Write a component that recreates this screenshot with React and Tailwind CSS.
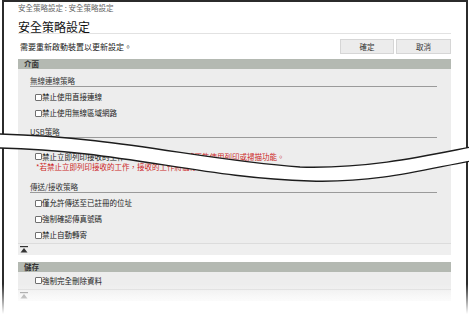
import React from "react";

const Check = ({ label, h = "h-[16px]" }) => (
  <div className={`flex ${h} items-center pl-[17px]`}>
    <span className="h-[7px] w-[7px] shrink-0 rounded-[1px] border border-[#6f6f6f] bg-white" />
    <span className="text-[7.5px] leading-[8px] text-[#222]">{label}</span>
  </div>
);

const SubHead = ({ children, className = "" }) => (
  <div
    className={`ml-[12px] mr-[14px] flex h-[13px] items-end border-b border-[#9a9a9a] pb-[1px] ${className}`}
  >
    <span className="text-[7.5px] leading-[8px] text-[#333]">{children}</span>
  </div>
);

const SectionBar = ({ children }) => (
  <div className="flex h-[10px] items-center bg-[#b4b9b2] pl-[6px]">
    <span className="text-[7.5px] font-bold leading-[8px] text-[#333]">
      {children}
    </span>
  </div>
);

const TopIcon = ({ faded }) => (
  <svg width="8" height="7" viewBox="0 0 8 7" className={faded ? "opacity-50" : ""}>
    <rect x="0" y="0" width="8" height="1.2" fill="#333" />
    <polygon points="4,2 7.5,6.5 0.5,6.5" fill="#333" />
  </svg>
);

export default function App() {
  return (
    <div className="relative h-[314px] w-[469px] overflow-hidden bg-white font-['Noto_Sans_CJK_TC','Noto_Sans',sans-serif]">
      <div className="ml-[2px] mr-[1px] h-[330px] border-x-2 border-t-2 border-[#2b2b2b] pl-[14px] pr-[15px]">
        {/* header */}
        <div className="pt-[2px] text-[7.5px] leading-[8px] text-[#666]">
          安全策略設定 : 安全策略設定
        </div>
        <div className="mt-[9px] border-b border-[#e2e2e2] text-[12px] leading-[12px] text-[#111]">
          安全策略設定
        </div>
        <div className="mt-[5px] flex h-[15px] items-center justify-between">
          <span className="pl-[2px] text-[8px] leading-[8px] text-[#222]">
            需要重新啟動裝置以更新設定。
          </span>
          <div className="flex h-[15px] gap-[2px]">
            <button className="h-[15px] w-[54px] border border-[#d6d6d6] bg-[#ececec] text-[7.5px] leading-[8px] text-[#333]">
              確定
            </button>
            <button className="h-[15px] w-[55px] border border-[#d6d6d6] bg-[#ececec] text-[7.5px] leading-[8px] text-[#333]">
              取消
            </button>
          </div>
        </div>

        {/* 介面 */}
        <div className="mt-[5px]">
          <SectionBar>介面</SectionBar>
          <div className="bg-[#ededed] pt-[5px]">
            <SubHead>無線連線策略</SubHead>
            <div className="mt-[2px]">
              <Check label="禁止使用直接連線" />
              <Check label="禁止使用無線區域網路" />
            </div>
            <SubHead className="mt-[4px]">USB策略</SubHead>
            <div className="mt-[12px]">
              <Check label="禁止立即列印接收的工作" h="h-[13px]" />
              <div className="h-[8px] whitespace-nowrap pl-[18px] text-[7.5px] leading-[8px] text-[#cc1f1f]">
                *若禁止立即列印接收的工作，接收的工作將儲存在記憶體
              </div>
            </div>
            <SubHead className="mt-[9px]">傳送/接收策略</SubHead>
            <div className="mt-[2px]">
              <Check label="僅允許傳送至已註冊的位址" />
              <Check label="強制確認傳真號碼" />
              <Check label="禁止自動轉寄" />
            </div>
            <div className="flex h-[12px] items-center border-t border-[#dcdcdc] bg-[#efefef] pl-[2px]">
              <TopIcon />
            </div>
          </div>
        </div>

        {/* 儲存 */}
        <div className="mt-[7px]">
          <SectionBar>儲存</SectionBar>
          <div className="bg-[#ededed]">
            <Check label="強制完全刪除資料" h="h-[17px]" />
            <div className="flex h-[12px] items-center border-t border-[#dcdcdc] bg-linear-to-b from-[#efefef] to-[#f7f7f7] pl-[2px]">
              <TopIcon faded />
            </div>
          </div>
        </div>
      </div>

      {/* upper piece fragment seen above the tear */}
      <div className="absolute left-[187px] top-[153px] whitespace-nowrap text-[7.5px] leading-[8px] text-[#cc1f1f]">
        將不能使用列印或掃描功能。
      </div>

      {/* torn-paper break */}
      <svg
        className="pointer-events-none absolute left-0 top-0"
        width="469"
        height="314"
        viewBox="0 0 469 314"
      >
        <path
          d="M-2,134 C120,137 200,160 300,167 C370,169 430,155 471,147 L471,161 C430,168 380,183 310,181 C200,178 120,150 -2,148 Z"
          fill="#fff"
        />
        <path
          d="M-2,134 C120,137 200,160 300,167 C370,169 430,155 471,147"
          fill="none"
          stroke="#1c1c1c"
          strokeWidth="1.4"
        />
        <path
          d="M-2,148 C120,150 200,178 310,181 C380,183 430,168 471,161"
          fill="none"
          stroke="#1c1c1c"
          strokeWidth="1.4"
        />
      </svg>

      {/* bottom fade */}
      <div className="pointer-events-none absolute bottom-0 left-0 h-[30px] w-full bg-linear-to-b from-transparent to-white" />
    </div>
  );
}
